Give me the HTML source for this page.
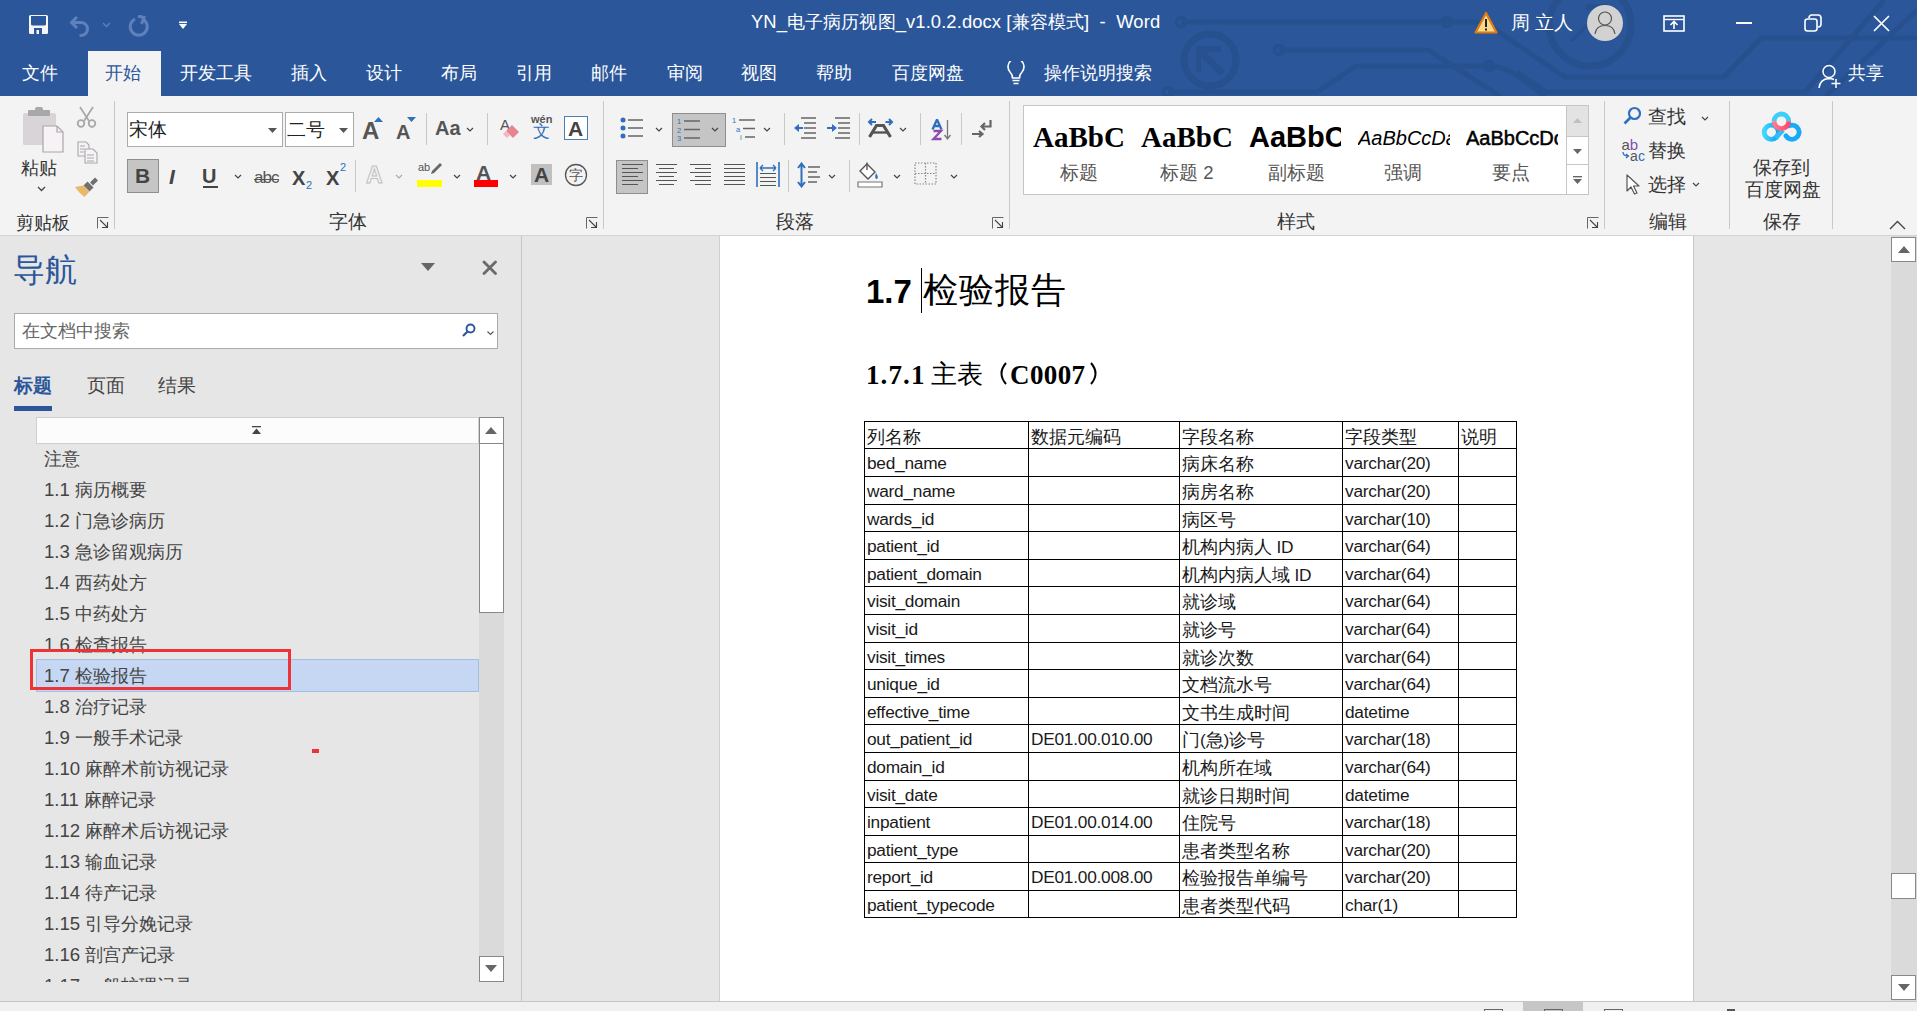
<!DOCTYPE html>
<html><head><meta charset="utf-8">
<style>
*{box-sizing:border-box}
html,body{margin:0;padding:0}
body{width:1917px;height:1011px;overflow:hidden;position:relative;background:#e6e6e6;font-family:"Liberation Sans",sans-serif;color:#262626}
.a{position:absolute}
.t{position:absolute;white-space:nowrap;line-height:1}
#title{left:0;top:0;width:1917px;height:96px;background:#2b579a;overflow:hidden}
.tab{position:absolute;top:64px;font-size:18px;color:#fff;white-space:nowrap;line-height:1}
#ribbon{left:0;top:96px;width:1917px;height:140px;background:#f3f3f3;border-bottom:1px solid #d4d4d4}
.sep{position:absolute;width:1px;background:#c8c8c8}
.glabel{position:absolute;top:117px;font-size:18px;color:#444;white-space:nowrap;line-height:1}
#nav{left:0;top:236px;width:522px;height:765px;background:#e6e6e6;border-right:1px solid #c6c6c6}
.ni{position:absolute;left:44px;font-size:18px;color:#444;white-space:nowrap;line-height:1}
#page{left:719px;top:236px;width:975px;height:765px;background:#fff;border-left:1px solid #d0d0d0;border-right:1px solid #c6c6c6}
table.d{position:absolute;left:864px;top:421px;border-collapse:collapse;font-size:17px;color:#000}
table.d td{border:1px solid #000;height:27.56px;padding:0 0 0 2px;line-height:1;vertical-align:middle;white-space:nowrap}
.td{font-size:17.3px;color:#1a1a1a;letter-spacing:-0.25px}
.cj{font-size:18px;letter-spacing:0}
</style></head><body>
<div id="title" class="a">
<svg class="a" style="left:0;top:0" width="1917" height="96" viewBox="0 0 1917 96">
<g fill="none" stroke="#26508e" stroke-width="5">
<path d="M1181 22 H1484 L1565 77 H1724 L1761 38 H1917"/>
<circle cx="1181" cy="22" r="4.5" stroke-width="3.5"/><circle cx="1447" cy="22" r="4.5" stroke-width="3.5"/>
<path d="M1279 50 H1428 L1500 96"/>
<circle cx="1279" cy="50" r="4.5" stroke-width="3.5"/>
<path d="M1168 92 H1317 L1356 66 H1489 Q1505 66 1520 78 L1545 96"/>
<circle cx="1168" cy="92" r="4.5" stroke-width="3.5"/><circle cx="1489" cy="66" r="4.5" stroke-width="3.5"/>
<path d="M1517 72 L1546 92 H1805 L1884 0"/>
<path d="M1826 96 L1917 10"/>
<circle cx="1210" cy="60" r="26" stroke-width="7"/>
<circle cx="1590" cy="25" r="41" stroke-width="7"/>
</g>
<g fill="#26508e">
<path d="M1196 46 h25 v6 h-15 l19 19 -5 5 -19 -19 v15 h-5z"/>
<path d="M1570 40 l30 -30 h-14 v-6 h22 v22 h-6 v-13 l-29 29z"/>
</g>
</svg>
<!-- QAT -->
<svg class="a" style="left:28px;top:14px" width="22" height="22" viewBox="0 0 22 22"><rect x="1" y="1" width="19" height="19" rx="1.5" fill="#f5f5f5"/><path d="M3 2 H18 V10 Q18 11.5 16.5 11.5 H4.5 Q3 11.5 3 10z" fill="#2b579a"/><rect x="6" y="14" width="8" height="6" fill="#2b579a"/><rect x="8.5" y="16" width="2.5" height="4" fill="#f5f5f5"/></svg>
<svg class="a" style="left:69px;top:15px" width="24" height="22" viewBox="0 0 24 22"><path d="M8 2 L2.5 7.5 L8 13" fill="none" stroke="#5f80bb" stroke-width="3"/><path d="M3 7.5 H12 A6.5 6.5 0 0 1 12 20.5 H10.5" fill="none" stroke="#5f80bb" stroke-width="3"/></svg>
<svg class="a" style="left:102px;top:22px" width="9" height="6" viewBox="0 0 9 6"><path d="M1 1 L4.5 4.5 L8 1" fill="none" stroke="#5f80bb" stroke-width="1.3"/></svg>
<svg class="a" style="left:127px;top:15px" width="23" height="22" viewBox="0 0 23 22"><path d="M15.5 4 A8.5 8.5 0 1 1 8 4" fill="none" stroke="#5f80bb" stroke-width="3"/><path d="M11 1 L17 2.5 L14.5 9" fill="none" stroke="#5f80bb" stroke-width="3"/></svg>
<svg class="a" style="left:179px;top:21px" width="9" height="9" viewBox="0 0 9 9"><rect x="0" y="0.5" width="8" height="1.6" fill="#fff"/><path d="M0 3 H8 L4 8z" fill="#fff"/></svg>
<div class="t" style="left:751px;top:13px;font-size:18.4px;letter-spacing:0.1px;color:#fff">YN_电子病历视图_v1.0.2.docx [兼容模式]&nbsp; - &nbsp;Word</div>
<svg class="a" style="left:1474px;top:11px" width="24" height="23" viewBox="0 0 24 23"><path d="M12 2 L22.5 21.5 H1.5z" fill="#f8d98b" stroke="#e07a10" stroke-width="2.2" stroke-linejoin="round"/><rect x="11" y="8" width="2" height="8" fill="#222"/><rect x="11" y="17.5" width="2" height="2" fill="#222"/></svg>
<div class="t" style="left:1511px;top:13px;font-size:19px;color:#fff">周 立人</div>
<div class="a" style="left:1587px;top:5px;width:36px;height:36px;border-radius:50%;background:#d2d2d2"></div>
<svg class="a" style="left:1587px;top:5px" width="36" height="36" viewBox="0 0 36 36"><circle cx="18" cy="13.5" r="6.5" fill="none" stroke="#555" stroke-width="1.2"/><path d="M8 29 Q9 20.5 18 20.5 Q27 20.5 28 29" fill="none" stroke="#555" stroke-width="1.2"/></svg>
<svg class="a" style="left:1663px;top:15px" width="22" height="17" viewBox="0 0 22 17"><rect x="1" y="1" width="20" height="15" fill="none" stroke="#fff" stroke-width="1.6"/><path d="M1 4.5 H21" stroke="#fff" stroke-width="1.4"/><path d="M11 14 V7 M7.5 10 L11 6.5 L14.5 10" fill="none" stroke="#fff" stroke-width="1.6"/></svg>
<div class="a" style="left:1736px;top:22px;width:16px;height:1.6px;background:#fff"></div>
<svg class="a" style="left:1804px;top:14px" width="18" height="18" viewBox="0 0 18 18"><rect x="1" y="5" width="12" height="12" rx="2.5" fill="none" stroke="#fff" stroke-width="1.6"/><path d="M5 4 Q5 1 8 1 H14 Q17 1 17 4 V10 Q17 13 14 13" fill="none" stroke="#fff" stroke-width="1.6"/></svg>
<svg class="a" style="left:1873px;top:15px" width="17" height="17" viewBox="0 0 17 17"><path d="M1 1 L16 16 M16 1 L1 16" stroke="#fff" stroke-width="1.7"/></svg>
<!-- tabs -->
<div class="a" style="left:88px;top:51px;width:73px;height:45px;background:#f3f3f3"></div>
<div class="tab" style="left:22px">文件</div>
<div class="tab" style="left:105px;color:#2b579a">开始</div>
<div class="tab" style="left:180px">开发工具</div>
<div class="tab" style="left:291px">插入</div>
<div class="tab" style="left:366px">设计</div>
<div class="tab" style="left:441px">布局</div>
<div class="tab" style="left:516px">引用</div>
<div class="tab" style="left:591px">邮件</div>
<div class="tab" style="left:667px">审阅</div>
<div class="tab" style="left:741px">视图</div>
<div class="tab" style="left:816px">帮助</div>
<div class="tab" style="left:892px">百度网盘</div>
<svg class="a" style="left:1006px;top:61px" width="20" height="25" viewBox="0 0 20 25"><path d="M6.5 17 Q6.5 13.5 4 11 A8 8 0 1 1 16 11 Q13.5 13.5 13.5 17z" fill="none" stroke="#fff" stroke-width="1.6"/><path d="M6.5 19.5 H13.5 M7.5 22.5 H12.5" stroke="#fff" stroke-width="1.6"/></svg>
<div class="tab" style="left:1044px">操作说明搜索</div>
<svg class="a" style="left:1818px;top:64px" width="24" height="25" viewBox="0 0 24 25"><circle cx="11" cy="7.5" r="6" fill="none" stroke="#fff" stroke-width="1.5"/><path d="M1 24 Q2 15 11 14.5 Q14 14.5 16 15.5" fill="none" stroke="#fff" stroke-width="1.5"/><path d="M18 15 V24 M13.5 19.5 H22.5" stroke="#fff" stroke-width="1.5"/></svg>
<div class="tab" style="left:1848px">共享</div>
</div>
<div id="ribbon" class="a">
<!-- clipboard group -->
<svg class="a" style="left:22px;top:11px" width="43" height="46" viewBox="0 0 43 46"><path d="M3 6 Q1 6 1 8 V37 Q1 38 3 38 H21 V19 H34 V8 Q34 6 32 6z" fill="#d8d4d8"/><rect x="6" y="3" width="22" height="6" rx="1" fill="#a8a8a8"/><rect x="13" y="0" width="8" height="5" rx="2" fill="#a8a8a8"/><path d="M21 19 H35 L41 25 V45 H21z" fill="#f6f2f6" stroke="#a8a8a8" stroke-width="1.2"/><path d="M35 19 V25 H41" fill="none" stroke="#a8a8a8" stroke-width="1.2"/></svg>
<div class="t" style="left:21px;top:62.5px;font-size:18px;color:#333">粘贴</div>
<svg class="a" style="left:37px;top:90px" width="9" height="6" viewBox="0 0 9 6"><path d="M1 1 L4.5 4.5 L8 1" fill="none" stroke="#444" stroke-width="1.3"/></svg>
<svg class="a" style="left:76px;top:10px" width="21" height="22" viewBox="0 0 21 22"><path d="M4 1 L13 15 M17 1 L8 15" stroke="#a8a8a8" stroke-width="1.8"/><circle cx="5" cy="17.5" r="3.3" fill="none" stroke="#a8a8a8" stroke-width="1.8"/><circle cx="16" cy="17.5" r="3.3" fill="none" stroke="#a8a8a8" stroke-width="1.8"/></svg>
<svg class="a" style="left:77px;top:45px" width="21" height="23" viewBox="0 0 21 23"><path d="M1 1 H9 L12 4 V15 H1z" fill="#f6f2f6" stroke="#a8a8a8" stroke-width="1.1"/><path d="M8 8 H16 L20 12 V22 H8z" fill="#f6f2f6" stroke="#a8a8a8" stroke-width="1.1"/><path d="M3 5 H8 M3 8 H7 M3 11 H7 M10 14 H17 M10 17 H17 M10 20 H17" stroke="#a8a8a8" stroke-width="1"/></svg>
<svg class="a" style="left:75px;top:80px" width="24" height="23" viewBox="0 0 24 23"><path d="M20 1.5 L23 4.5 L18 9.5 L15 6.5z" fill="#707070"/><path d="M12.5 5.5 L18.5 11.5 L14.5 15.5 L8.5 9.5z" fill="#707070"/><path d="M8.5 9.5 L14.5 15.5 L9.5 21 Q4 17 0 11z" fill="#e8b96a"/></svg>
<div class="t" style="left:16px;top:117.5px;font-size:18px;color:#333">剪贴板</div>
<svg class="a" style="left:97px;top:121px" width="12" height="12" viewBox="0 0 12 12"><path d="M0.5 11.5 V0.5 H11.5" fill="none" stroke="#666" stroke-width="1"/><path d="M3 3 L10 10 M5 10.5 H10.5 V5" fill="none" stroke="#444" stroke-width="1.1"/></svg>
<div class="sep" style="left:114px;top:5px;height:128px"></div>
<!-- font group -->
<div class="a" style="left:127px;top:16px;width:156px;height:35px;background:#fff;border:1px solid #ababab"></div>
<div class="t" style="left:129px;top:25px;font-size:18.5px;color:#222">宋体</div>
<svg class="a" style="left:268px;top:32px" width="9" height="5" viewBox="0 0 9 5"><path d="M0 0 H9 L4.5 5z" fill="#555"/></svg>
<div class="a" style="left:285px;top:16px;width:69px;height:35px;background:#fff;border:1px solid #ababab"></div>
<div class="t" style="left:287px;top:25px;font-size:18.5px;color:#222">二号</div>
<svg class="a" style="left:339px;top:32px" width="9" height="5" viewBox="0 0 9 5"><path d="M0 0 H9 L4.5 5z" fill="#555"/></svg>
<div class="t" style="left:362px;top:23px;font-size:24px;font-weight:bold;color:#555">A</div>
<svg class="a" style="left:374px;top:21px" width="9" height="5" viewBox="0 0 9 5"><path d="M0 5 H9 L4.5 0z" fill="#2f6fbd"/></svg>
<div class="t" style="left:396px;top:26px;font-size:20px;font-weight:bold;color:#555">A</div>
<svg class="a" style="left:407px;top:21px" width="9" height="5" viewBox="0 0 9 5"><path d="M0 0 H9 L4.5 5z" fill="#2f6fbd"/></svg>
<div class="sep" style="left:426px;top:17px;height:32px"></div>
<div class="t" style="left:435px;top:22px;font-size:20px;font-weight:bold;color:#555">Aa</div>
<svg class="a" style="left:466px;top:31px" width="8" height="5" viewBox="0 0 8 5"><path d="M1 1 L4 4 L7 1" fill="none" stroke="#444" stroke-width="1.2"/></svg>
<div class="sep" style="left:487px;top:17px;height:32px"></div>
<div class="t" style="left:500px;top:21px;font-size:15px;color:#555">A</div>
<svg class="a" style="left:503px;top:27px" width="17" height="17" viewBox="0 0 17 17"><path d="M9 2 L16 9 L10 15 L3 8z" fill="#e8838f"/><path d="M3 8 L7 12 L4 15 L0 11z" fill="#f3b6bd"/></svg>
<div class="t" style="left:531px;top:18px;font-size:11px;color:#555;font-weight:bold">wén</div>
<div class="t" style="left:533px;top:27px;font-size:17px;color:#2f6fbd">文</div>
<div class="a" style="left:564px;top:20px;width:24px;height:24px;border:1px solid #4a7ebb;background:#fff"></div>
<div class="t" style="left:568px;top:22px;font-size:21px;font-weight:bold;color:#444">A</div>
<div class="a" style="left:127px;top:63px;width:32px;height:34px;background:#c5c5c5;border:1px solid #8e8e8e"></div>
<div class="t" style="left:135px;top:69px;font-size:21px;font-weight:bold;color:#444">B</div>
<div class="t" style="left:169px;top:70px;font-size:21px;font-style:italic;font-weight:bold;color:#444">I</div>
<div class="t" style="left:202px;top:70px;font-size:20px;font-weight:bold;color:#444">U</div>
<div class="a" style="left:203px;top:90px;width:15px;height:2px;background:#444"></div>
<svg class="a" style="left:234px;top:78px" width="8" height="5" viewBox="0 0 8 5"><path d="M1 1 L4 4 L7 1" fill="none" stroke="#444" stroke-width="1.2"/></svg>
<div class="t" style="left:254px;top:73px;font-size:17px;color:#555;letter-spacing:-1px">abc</div>
<div class="a" style="left:254px;top:83px;width:25px;height:1.3px;background:#555"></div>
<div class="t" style="left:292px;top:72px;font-size:20px;font-weight:bold;color:#444">X</div>
<div class="t" style="left:306px;top:84px;font-size:11px;color:#2f6fbd">2</div>
<div class="t" style="left:326px;top:72px;font-size:20px;font-weight:bold;color:#444">X</div>
<div class="t" style="left:340px;top:66px;font-size:11px;color:#2f6fbd">2</div>
<div class="sep" style="left:355px;top:64px;height:32px"></div>
<div class="t" style="left:366px;top:68px;font-size:23px;font-weight:bold;color:#f3f3f3;-webkit-text-stroke:1px #c0c0c0">A</div>
<svg class="a" style="left:395px;top:78px" width="8" height="5" viewBox="0 0 8 5"><path d="M1 1 L4 4 L7 1" fill="none" stroke="#aaa" stroke-width="1.2"/></svg>
<div class="t" style="left:418px;top:66px;font-size:11px;color:#555">ab</div>
<svg class="a" style="left:428px;top:66px" width="15" height="15" viewBox="0 0 15 15"><path d="M12 1 L14 3 L6 11 L3 12 L4 9z" fill="#666"/></svg>
<div class="a" style="left:417px;top:84px;width:25px;height:7px;background:#ffff00"></div>
<svg class="a" style="left:453px;top:78px" width="8" height="5" viewBox="0 0 8 5"><path d="M1 1 L4 4 L7 1" fill="none" stroke="#444" stroke-width="1.2"/></svg>
<div class="t" style="left:476px;top:66px;font-size:21px;font-weight:bold;color:#555">A</div>
<div class="a" style="left:474px;top:84px;width:24px;height:7px;background:#ff0000"></div>
<svg class="a" style="left:509px;top:78px" width="8" height="5" viewBox="0 0 8 5"><path d="M1 1 L4 4 L7 1" fill="none" stroke="#444" stroke-width="1.2"/></svg>
<div class="a" style="left:531px;top:68px;width:21px;height:21px;background:#c0c0c0"></div>
<div class="t" style="left:534px;top:68px;font-size:21px;font-weight:bold;color:#444">A</div>
<svg class="a" style="left:564px;top:67px" width="24" height="24" viewBox="0 0 24 24"><circle cx="12" cy="12" r="10.5" fill="none" stroke="#555" stroke-width="1.3"/></svg>
<div class="t" style="left:569px;top:72px;font-size:14px;color:#555">字</div>
<div class="t" style="left:329px;top:117px;font-size:18.5px;color:#333">字体</div>
<svg class="a" style="left:586px;top:121px" width="12" height="12" viewBox="0 0 12 12"><path d="M0.5 11.5 V0.5 H11.5" fill="none" stroke="#666" stroke-width="1"/><path d="M3 3 L10 10 M5 10.5 H10.5 V5" fill="none" stroke="#444" stroke-width="1.1"/></svg>
<div class="sep" style="left:603px;top:5px;height:128px"></div>
<svg class="a" style="left:620px;top:21px" width="24" height="22" viewBox="0 0 24 22"><circle cx="3" cy="3" r="2.5" fill="#2f6fbd"/><circle cx="3" cy="11" r="2.5" fill="#2f6fbd"/><circle cx="3" cy="19" r="2.5" fill="#2f6fbd"/><path d="M8 3 H23 M8 11 H23 M8 19 H23" stroke="#666" stroke-width="1.4"/></svg><svg class="a" style="left:655px;top:31px" width="8" height="5" viewBox="0 0 8 5"><path d="M1 1 L4 4 L7 1" fill="none" stroke="#444" stroke-width="1.2"/></svg><div class="a" style="left:672px;top:17px;width:54px;height:34px;background:#c5c5c5;border:1px solid #8e8e8e"></div><svg class="a" style="left:677px;top:20px" width="24" height="26" viewBox="0 0 24 26"><text x="0" y="8" font-size="7.5" fill="#2f6fbd" font-family="Liberation Sans">1</text><text x="0" y="16.5" font-size="7.5" fill="#2f6fbd" font-family="Liberation Sans">2</text><text x="0" y="25" font-size="7.5" fill="#2f6fbd" font-family="Liberation Sans">3</text><path d="M7 5 H23 M7 13.5 H23 M7 22 H23" stroke="#666" stroke-width="1.4"/></svg><svg class="a" style="left:711px;top:31px" width="8" height="5" viewBox="0 0 8 5"><path d="M1 1 L4 4 L7 1" fill="none" stroke="#444" stroke-width="1.2"/></svg><svg class="a" style="left:732px;top:19px" width="24" height="26" viewBox="0 0 24 26"><text x="0" y="8" font-size="7.5" fill="#2f6fbd" font-family="Liberation Sans">1</text><text x="4" y="16.5" font-size="7.5" fill="#2f6fbd" font-family="Liberation Sans">a</text><text x="8" y="25" font-size="7.5" fill="#2f6fbd" font-family="Liberation Sans">i</text><path d="M7 5 H23 M11 13.5 H23 M13 22 H23" stroke="#666" stroke-width="1.4"/></svg><svg class="a" style="left:763px;top:31px" width="8" height="5" viewBox="0 0 8 5"><path d="M1 1 L4 4 L7 1" fill="none" stroke="#444" stroke-width="1.2"/></svg><div class="sep" style="left:784px;top:17px;height:32px"></div><svg class="a" style="left:793px;top:21px" width="24" height="22" viewBox="0 0 24 22"><path d="M8 1 H23 M11 6 H23 M11 11 H23 M11 16 H23 M8 21 H23" stroke="#666" stroke-width="1.4"/><path d="M1 11 L6 7 V15z" fill="#2f6fbd"/><path d="M5 11 H10" stroke="#2f6fbd" stroke-width="2"/></svg><svg class="a" style="left:827px;top:21px" width="24" height="22" viewBox="0 0 24 22"><path d="M8 1 H23 M11 6 H23 M11 11 H23 M11 16 H23 M8 21 H23" stroke="#666" stroke-width="1.4"/><path d="M10 11 L5 7 V15z" fill="#2f6fbd"/><path d="M0 11 H6" stroke="#2f6fbd" stroke-width="2"/></svg><div class="sep" style="left:859px;top:17px;height:32px"></div><svg class="a" style="left:867px;top:20px" width="28" height="24" viewBox="0 0 28 24"><path d="M2.5 21 L9.5 9.5 H16.5 L23.5 21" fill="none" stroke="#555" stroke-width="3.2" stroke-linejoin="miter"/><path d="M6 16.5 H20" stroke="#555" stroke-width="2.4"/><path d="M2.5 6 H9 M5 3 L2 6 L5 9 M18.5 6 H25 M22 3 L25 6 L22 9" fill="none" stroke="#2f6fbd" stroke-width="2"/></svg><svg class="a" style="left:899px;top:31px" width="8" height="5" viewBox="0 0 8 5"><path d="M1 1 L4 4 L7 1" fill="none" stroke="#444" stroke-width="1.2"/></svg><div class="sep" style="left:920px;top:17px;height:32px"></div><svg class="a" style="left:931px;top:22.5px" width="22" height="22" viewBox="0 0 22 22"><path d="M1.5 10.5 L6 0.5 L10.5 10.5 M3.2 7 H8.8" fill="none" stroke="#2f6fbd" stroke-width="2.3"/><path d="M2.5 12 H10 L2.5 20 H10.5" fill="none" stroke="#8a4cb0" stroke-width="2.3"/><path d="M16.5 1 V20 M13.5 16 L16.5 20 L19.5 16" fill="none" stroke="#777" stroke-width="1.3"/></svg><div class="sep" style="left:961px;top:17px;height:32px"></div><svg class="a" style="left:970px;top:23px" width="23" height="20" viewBox="0 0 23 20"><path d="M20.5 1 V7.5 H12 M15 4 L11.5 7.5 L15 11" fill="none" stroke="#666" stroke-width="2.2"/><path d="M2 15 H12 M9 12 L12.5 15 L9 18" fill="none" stroke="#666" stroke-width="2.2"/></svg><div class="a" style="left:616px;top:64px;width:32px;height:34px;background:#c5c5c5;border:1px solid #8e8e8e"></div><svg class="a" style="left:622px;top:67px" width="22" height="22" viewBox="0 0 22 22"><path d="M0 1.5 H21 M0 5.5 H16 M0 9.5 H21 M0 13.5 H16 M0 17.5 H21 M0 21.5 H16 " stroke="#555" stroke-width="1.2"/></svg><svg class="a" style="left:656px;top:67px" width="22" height="22" viewBox="0 0 22 22"><path d="M0 1.5 H21 M3 5.5 H18 M0 9.5 H21 M3 13.5 H18 M0 17.5 H21 M3 21.5 H18 " stroke="#555" stroke-width="1.2"/></svg><svg class="a" style="left:690px;top:67px" width="22" height="22" viewBox="0 0 22 22"><path d="M0 1.5 H21 M5 5.5 H21 M0 9.5 H21 M5 13.5 H21 M0 17.5 H21 M5 21.5 H21 " stroke="#555" stroke-width="1.2"/></svg><svg class="a" style="left:724px;top:67px" width="22" height="22" viewBox="0 0 22 22"><path d="M0 1.5 H21 M0 5.5 H21 M0 9.5 H21 M0 13.5 H21 M0 17.5 H21 M0 21.5 H21 " stroke="#555" stroke-width="1.2"/></svg><svg class="a" style="left:756px;top:66px" width="24" height="26" viewBox="0 0 24 26"><path d="M1 0 V25 M23 0 V25" stroke="#2f6fbd" stroke-width="1.6"/><path d="M4 6 H20 M4 6 L7 3 M4 6 L7 9 M20 6 L17 3 M20 6 L17 9" fill="none" stroke="#2f6fbd" stroke-width="1.4"/><path d="M4 11.5 H20 M4 15.5 H20 M4 19.5 H20 M4 23.5 H20" stroke="#555" stroke-width="1.1"/></svg><div class="sep" style="left:788px;top:64px;height:32px"></div><svg class="a" style="left:797px;top:66px" width="24" height="26" viewBox="0 0 24 26"><path d="M4.5 2 V24 M1 6 L4.5 1.5 L8 6 M1 20 L4.5 24.5 L8 20" fill="none" stroke="#2f6fbd" stroke-width="2"/><path d="M11 5 H23 M11 10 H20 M11 15 H23 M11 20 H20" stroke="#666" stroke-width="1.4"/></svg><svg class="a" style="left:828px;top:78px" width="8" height="5" viewBox="0 0 8 5"><path d="M1 1 L4 4 L7 1" fill="none" stroke="#444" stroke-width="1.2"/></svg><div class="sep" style="left:849px;top:64px;height:32px"></div><svg class="a" style="left:857px;top:66px" width="26" height="26" viewBox="0 0 26 26"><path d="M10 2 L18 10 L11 17 L3 9z" fill="#fff" stroke="#555" stroke-width="1.4"/><path d="M10 0.5 V8" stroke="#555" stroke-width="1.4"/><path d="M19 11 Q22 15 20 17 Q17 17 19 11z" fill="#2f6fbd"/><path d="M1 20 H25 V25 H1z" fill="#fff" stroke="#777" stroke-width="1.2"/></svg><svg class="a" style="left:893px;top:78px" width="8" height="5" viewBox="0 0 8 5"><path d="M1 1 L4 4 L7 1" fill="none" stroke="#444" stroke-width="1.2"/></svg><svg class="a" style="left:914px;top:66px" width="23" height="23" viewBox="0 0 23 23"><path d="M1 1 H22 V22 H1z M11.5 1 V22 M1 11.5 H22" fill="none" stroke="#888" stroke-width="1.2" stroke-dasharray="1.5 1.5"/></svg><svg class="a" style="left:950px;top:78px" width="8" height="5" viewBox="0 0 8 5"><path d="M1 1 L4 4 L7 1" fill="none" stroke="#444" stroke-width="1.2"/></svg><div class="t" style="left:776px;top:117px;font-size:18.5px;color:#333">段落</div><svg class="a" style="left:992px;top:121px" width="12" height="12" viewBox="0 0 12 12"><path d="M0.5 11.5 V0.5 H11.5" fill="none" stroke="#666" stroke-width="1"/><path d="M3 3 L10 10 M5 10.5 H10.5 V5" fill="none" stroke="#444" stroke-width="1.1"/></svg><div class="sep" style="left:1009px;top:5px;height:128px"></div><div class="a" style="left:1023px;top:9px;width:566px;height:90px;background:#fff;border:1px solid #c6c6c6"></div><div class="a" style="left:1566px;top:9px;width:23px;height:32px;background:#e3e3e3;border:1px solid #c6c6c6"></div><div class="a" style="left:1566px;top:40px;width:23px;height:29px;background:#fff;border:1px solid #c6c6c6"></div><div class="a" style="left:1566px;top:68px;width:23px;height:31px;background:#fff;border:1px solid #c6c6c6"></div><svg class="a" style="left:1573px;top:22px" width="9" height="5" viewBox="0 0 9 5"><path d="M0 5 H9 L4.5 0z" fill="#c0c0c0"/></svg><svg class="a" style="left:1573px;top:53px" width="9" height="5" viewBox="0 0 9 5"><path d="M0 0 H9 L4.5 5z" fill="#666"/></svg><svg class="a" style="left:1573px;top:80px" width="9" height="8" viewBox="0 0 9 8"><rect x="0" y="0" width="9" height="1.4" fill="#666"/><path d="M0 3 H9 L4.5 8z" fill="#666"/></svg><div class="a" style="left:1030px;top:24px;width:530px;height:36px;overflow:hidden"><div class="t" style="left:3px;top:3px;font-size:29px;font-weight:bold;font-family:'Liberation Serif',serif;color:#000;width:91px;overflow:hidden">AaBbC(</div><div class="t" style="left:111px;top:3px;font-size:29px;font-weight:bold;font-family:'Liberation Serif',serif;color:#000;width:91px;overflow:hidden">AaBbC(</div><div class="t" style="left:219px;top:3px;font-size:29px;font-weight:bold;font-family:'Liberation Sans',sans-serif;color:#000;width:92px;overflow:hidden">AaBbCc</div><div class="t" style="left:328px;top:8px;font-size:20px;font-style:italic;color:#000;width:92px;overflow:hidden">AaBbCcDa</div><div class="t" style="left:436px;top:8px;font-size:20px;color:#000;width:92px;overflow:hidden;-webkit-text-stroke:0.5px #000">AaBbCcDc</div></div><div class="t" style="left:1060px;top:68px;font-size:18.5px;color:#555">标题</div><div class="t" style="left:1160px;top:68px;font-size:18.5px;color:#555">标题 2</div><div class="t" style="left:1268px;top:68px;font-size:18.5px;color:#555">副标题</div><div class="t" style="left:1384px;top:68px;font-size:18.5px;color:#555">强调</div><div class="t" style="left:1492px;top:68px;font-size:18.5px;color:#555">要点</div><div class="t" style="left:1277px;top:117px;font-size:18.5px;color:#333">样式</div><svg class="a" style="left:1587px;top:121px" width="12" height="12" viewBox="0 0 12 12"><path d="M0.5 11.5 V0.5 H11.5" fill="none" stroke="#666" stroke-width="1"/><path d="M3 3 L10 10 M5 10.5 H10.5 V5" fill="none" stroke="#444" stroke-width="1.1"/></svg><div class="sep" style="left:1604px;top:5px;height:128px"></div><svg class="a" style="left:1623px;top:10px" width="19" height="19" viewBox="0 0 19 19"><circle cx="11.5" cy="7.5" r="5.5" fill="none" stroke="#2f6fbd" stroke-width="2.2"/><path d="M7.5 11.5 L1.5 17.5" stroke="#2f6fbd" stroke-width="2.6"/></svg><div class="t" style="left:1648px;top:12px;font-size:18.5px;color:#333">查找</div><svg class="a" style="left:1701px;top:20px" width="8" height="5" viewBox="0 0 8 5"><path d="M1 1 L4 4 L7 1" fill="none" stroke="#444" stroke-width="1.2"/></svg><svg class="a" style="left:1620px;top:41.5px" width="28" height="27" viewBox="0 0 28 27"><text x="1.5" y="11.5" font-size="15" font-family="Liberation Sans" fill="#555">a</text><text x="9.8" y="11.5" font-size="15" font-family="Liberation Sans" fill="#8a4cb0">b</text><text x="10" y="22.5" font-size="14" font-family="Liberation Sans" fill="#555">a</text><text x="18" y="22.5" font-size="14" font-family="Liberation Sans" fill="#2f6fbd">c</text><path d="M3 14 Q3 18 8 18 M6 16 L8.5 18 L6 20" fill="none" stroke="#2f6fbd" stroke-width="1.3"/></svg><div class="t" style="left:1648px;top:46px;font-size:18.5px;color:#333">替换</div><svg class="a" style="left:1626px;top:78px" width="16" height="21" viewBox="0 0 16 21"><path d="M1 1 V17 L5 13 L8.5 20 L11 19 L7.5 12 H13z" fill="#fff" stroke="#555" stroke-width="1.2" stroke-linejoin="round"/></svg><div class="t" style="left:1648px;top:80px;font-size:18.5px;color:#333">选择</div><svg class="a" style="left:1692px;top:86px" width="8" height="5" viewBox="0 0 8 5"><path d="M1 1 L4 4 L7 1" fill="none" stroke="#444" stroke-width="1.2"/></svg><div class="t" style="left:1649px;top:117px;font-size:18.5px;color:#333">编辑</div><div class="sep" style="left:1729px;top:5px;height:128px"></div><svg class="a" style="left:1750px;top:4px" width="65" height="50" viewBox="0 0 65 50"><defs><linearGradient id="bg1" x1="0" x2="1" y1="0" y2="0"><stop offset="0" stop-color="#41d6ff"/><stop offset="1" stop-color="#0c9ff5"/></linearGradient><linearGradient id="pk" x1="0" x2="1"><stop offset="0" stop-color="#ff7a8a"/><stop offset="1" stop-color="#ff4a70"/></linearGradient></defs>
<g fill="none" stroke-width="4.8" stroke-linecap="round">
<circle cx="21.3" cy="32.2" r="7.1" stroke="url(#bg1)"/>
<path d="M39.00 25.77 A7.1 7.1 0 1 1 35.85 35.75" stroke="#17aaf7"/>
<path d="M25.5 38 L33 30" stroke="#2dc0fb" stroke-linecap="butt"/>
<path d="M24.1 21.3 A7.3 7.3 0 0 1 38.7 21.3" stroke="#3ccff9" stroke-linecap="butt"/>
<path d="M24.1 21.3 A7.3 7.3 0 0 0 38.7 21.3" stroke="url(#pk)" stroke-linecap="butt"/>
</g></svg><div class="t" style="left:1753px;top:63px;font-size:18.5px;color:#333">保存到</div><div class="t" style="left:1745px;top:85px;font-size:18.5px;color:#333">百度网盘</div><div class="t" style="left:1763px;top:117px;font-size:18.5px;color:#333">保存</div><div class="sep" style="left:1832px;top:5px;height:128px"></div><svg class="a" style="left:1889px;top:124px" width="17" height="10" viewBox="0 0 17 10"><path d="M1 9 L8.5 1.5 L16 9" fill="none" stroke="#444" stroke-width="1.4"/></svg>
</div>
<div id="nav" class="a">
<div class="t" style="left:13px;top:18px;font-size:32px;color:#2b579a">导航</div>
<svg class="a" style="left:421px;top:27px" width="14" height="8" viewBox="0 0 14 8"><path d="M0 0 H14 L7 8z" fill="#666"/></svg>
<svg class="a" style="left:482px;top:24px" width="15" height="15" viewBox="0 0 15 15"><path d="M2 2 L13.5 13.5 M13.5 2 L2 13.5" stroke="#6a6a6a" stroke-width="2.8" stroke-linecap="round"/></svg>
<div class="a" style="left:14px;top:77px;width:484px;height:36px;background:#fff;border:1px solid #ababab"></div>
<div class="t" style="left:22px;top:86px;font-size:18px;color:#666">在文档中搜索</div>
<svg class="a" style="left:462px;top:87px" width="14" height="14" viewBox="0 0 14 14"><circle cx="8.5" cy="5.5" r="4" fill="none" stroke="#2b579a" stroke-width="1.9"/><path d="M5.5 8.5 L1 13" stroke="#2b579a" stroke-width="2.2"/></svg>
<svg class="a" style="left:487px;top:95px" width="7" height="5" viewBox="0 0 7 5"><path d="M0.5 0.5 L3.5 3.5 L6.5 0.5" fill="none" stroke="#555" stroke-width="1.1"/></svg>
<div class="t" style="left:14px;top:141px;font-size:18.5px;color:#2b579a;font-weight:bold">标题</div>
<div class="t" style="left:87px;top:141px;font-size:18.5px;color:#444">页面</div>
<div class="t" style="left:158px;top:141px;font-size:18.5px;color:#444">结果</div>
<div class="a" style="left:14px;top:170px;width:38px;height:5px;background:#2b579a"></div>
<div class="a" style="left:36px;top:181px;width:443px;height:27px;background:#fcfcfc;border:1px solid #d0d0d0"></div>
<svg class="a" style="left:252px;top:190px" width="9" height="8" viewBox="0 0 9 8"><rect x="0" y="0" width="9" height="1.3" fill="#444"/><path d="M0 8 H9 L4.5 2.5z" fill="#444"/></svg>
<div class="a" style="left:36px;top:208px;width:443px;height:538px;overflow:hidden">
<div class="a" style="left:0;top:215px;width:443px;height:33px;background:#c5d7f2;border:1px solid #a3bde3"></div>
<div class="ni" style="left:8px;top:6px">注意</div>
<div class="ni" style="left:8px;top:37px"><span style="font-size:18.6px">1.1 </span>病历概要</div>
<div class="ni" style="left:8px;top:68px"><span style="font-size:18.6px">1.2 </span>门急诊病历</div>
<div class="ni" style="left:8px;top:99px"><span style="font-size:18.6px">1.3 </span>急诊留观病历</div>
<div class="ni" style="left:8px;top:130px"><span style="font-size:18.6px">1.4 </span>西药处方</div>
<div class="ni" style="left:8px;top:161px"><span style="font-size:18.6px">1.5 </span>中药处方</div>
<div class="ni" style="left:8px;top:192px"><span style="font-size:18.6px">1.6 </span>检查报告</div>
<div class="ni" style="left:8px;top:223px"><span style="font-size:18.6px">1.7 </span>检验报告</div>
<div class="ni" style="left:8px;top:254px"><span style="font-size:18.6px">1.8 </span>治疗记录</div>
<div class="ni" style="left:8px;top:285px"><span style="font-size:18.6px">1.9 </span>一般手术记录</div>
<div class="ni" style="left:8px;top:316px"><span style="font-size:18.6px">1.10 </span>麻醉术前访视记录</div>
<div class="ni" style="left:8px;top:347px"><span style="font-size:18.6px">1.11 </span>麻醉记录</div>
<div class="ni" style="left:8px;top:378px"><span style="font-size:18.6px">1.12 </span>麻醉术后访视记录</div>
<div class="ni" style="left:8px;top:409px"><span style="font-size:18.6px">1.13 </span>输血记录</div>
<div class="ni" style="left:8px;top:440px"><span style="font-size:18.6px">1.14 </span>待产记录</div>
<div class="ni" style="left:8px;top:471px"><span style="font-size:18.6px">1.15 </span>引导分娩记录</div>
<div class="ni" style="left:8px;top:502px"><span style="font-size:18.6px">1.16 </span>剖宫产记录</div>
<div class="ni" style="left:8px;top:533px"><span style="font-size:18.6px">1.17 </span>一般护理记录</div>

</div>
<div class="a" style="left:479px;top:181px;width:25px;height:565px;background:#dadada"></div>
<div class="a" style="left:479px;top:181px;width:25px;height:27px;background:#fff;border:1px solid #888"></div>
<svg class="a" style="left:485px;top:191px" width="12" height="7" viewBox="0 0 12 7"><path d="M0 7 H12 L6 0z" fill="#666"/></svg>
<div class="a" style="left:479px;top:207px;width:25px;height:170px;background:#fff;border:1px solid #888"></div>
<div class="a" style="left:479px;top:720px;width:25px;height:26px;background:#fff;border:1px solid #888"></div>
<svg class="a" style="left:485px;top:729px" width="12" height="7" viewBox="0 0 12 7"><path d="M0 0 H12 L6 7z" fill="#666"/></svg>
<div class="a" style="left:30px;top:413px;width:261px;height:41px;border:3px solid #ee3338"></div>
<div class="a" style="left:312px;top:513px;width:7px;height:4px;background:#ee3338"></div>
</div>
<div id="page" class="a"></div>
<div id="doc"><div class="t" style="left:866px;top:275px;font-size:33px;font-weight:bold;color:#000">1.7</div><div class="a" style="left:921px;top:268px;width:1px;height:45px;background:#000"></div><div class="t" style="left:923px;top:271.5px;font-size:35px;color:#000;letter-spacing:1px">检验报告</div><div class="t" style="left:866px;top:361.5px;font-size:27px;font-weight:bold;font-family:'Liberation Serif',serif;color:#000;letter-spacing:1.1px">1.7.1</div><div class="t" style="left:931px;top:362px;font-size:25.5px;color:#000">主表</div><svg class="a" style="left:990px;top:360px" width="116" height="28" viewBox="0 0 116 28"><path d="M16 3 Q7 13.5 16 24" fill="none" stroke="#000" stroke-width="2"/><path d="M101 3 Q110 13.5 101 24" fill="none" stroke="#000" stroke-width="2"/></svg><div class="t" style="left:1010px;top:361.5px;font-size:27px;font-weight:bold;font-family:'Liberation Serif',serif;color:#000;letter-spacing:0.4px">C0007</div><svg class="a" style="left:0;top:0" width="1917" height="1011" shape-rendering="crispEdges"><rect x="864" y="421" width="1" height="497" fill="#000"/><rect x="1028" y="421" width="1" height="497" fill="#000"/><rect x="1179" y="421" width="1" height="497" fill="#000"/><rect x="1342" y="421" width="1" height="497" fill="#000"/><rect x="1458" y="421" width="1" height="497" fill="#000"/><rect x="1516" y="421" width="1" height="497" fill="#000"/><rect x="864" y="421" width="653" height="1" fill="#000"/><rect x="864" y="448" width="653" height="1" fill="#000"/><rect x="864" y="476" width="653" height="1" fill="#000"/><rect x="864" y="504" width="653" height="1" fill="#000"/><rect x="864" y="531" width="653" height="1" fill="#000"/><rect x="864" y="559" width="653" height="1" fill="#000"/><rect x="864" y="586" width="653" height="1" fill="#000"/><rect x="864" y="614" width="653" height="1" fill="#000"/><rect x="864" y="642" width="653" height="1" fill="#000"/><rect x="864" y="669" width="653" height="1" fill="#000"/><rect x="864" y="697" width="653" height="1" fill="#000"/><rect x="864" y="724" width="653" height="1" fill="#000"/><rect x="864" y="752" width="653" height="1" fill="#000"/><rect x="864" y="780" width="653" height="1" fill="#000"/><rect x="864" y="807" width="653" height="1" fill="#000"/><rect x="864" y="835" width="653" height="1" fill="#000"/><rect x="864" y="862" width="653" height="1" fill="#000"/><rect x="864" y="890" width="653" height="1" fill="#000"/><rect x="864" y="917" width="653" height="1" fill="#000"/></svg><div class="t td" style="left:867px;top:428px"><span class="cj">列名称</span></div><div class="t td" style="left:1031px;top:428px"><span class="cj">数据元编码</span></div><div class="t td" style="left:1182px;top:428px"><span class="cj">字段名称</span></div><div class="t td" style="left:1345px;top:428px"><span class="cj">字段类型</span></div><div class="t td" style="left:1461px;top:428px"><span class="cj">说明</span></div><div class="t td" style="left:867px;top:455px">bed_name</div><div class="t td" style="left:1182px;top:455px"><span class="cj">病床名称</span></div><div class="t td" style="left:1345px;top:455px">varchar(20)</div><div class="t td" style="left:867px;top:483px">ward_name</div><div class="t td" style="left:1182px;top:483px"><span class="cj">病房名称</span></div><div class="t td" style="left:1345px;top:483px">varchar(20)</div><div class="t td" style="left:867px;top:511px">wards_id</div><div class="t td" style="left:1182px;top:511px"><span class="cj">病区号</span></div><div class="t td" style="left:1345px;top:511px">varchar(10)</div><div class="t td" style="left:867px;top:538px">patient_id</div><div class="t td" style="left:1182px;top:538px"><span class="cj">机构内病人</span> ID</div><div class="t td" style="left:1345px;top:538px">varchar(64)</div><div class="t td" style="left:867px;top:566px">patient_domain</div><div class="t td" style="left:1182px;top:566px"><span class="cj">机构内病人域</span> ID</div><div class="t td" style="left:1345px;top:566px">varchar(64)</div><div class="t td" style="left:867px;top:593px">visit_domain</div><div class="t td" style="left:1182px;top:593px"><span class="cj">就诊域</span></div><div class="t td" style="left:1345px;top:593px">varchar(64)</div><div class="t td" style="left:867px;top:621px">visit_id</div><div class="t td" style="left:1182px;top:621px"><span class="cj">就诊号</span></div><div class="t td" style="left:1345px;top:621px">varchar(64)</div><div class="t td" style="left:867px;top:649px">visit_times</div><div class="t td" style="left:1182px;top:649px"><span class="cj">就诊次数</span></div><div class="t td" style="left:1345px;top:649px">varchar(64)</div><div class="t td" style="left:867px;top:676px">unique_id</div><div class="t td" style="left:1182px;top:676px"><span class="cj">文档流水号</span></div><div class="t td" style="left:1345px;top:676px">varchar(64)</div><div class="t td" style="left:867px;top:704px">effective_time</div><div class="t td" style="left:1182px;top:704px"><span class="cj">文书生成时间</span></div><div class="t td" style="left:1345px;top:704px">datetime</div><div class="t td" style="left:867px;top:731px">out_patient_id</div><div class="t td" style="left:1031px;top:731px">DE01.00.010.00</div><div class="t td" style="left:1182px;top:731px"><span class="cj">门</span>(<span class="cj">急</span>)<span class="cj">诊号</span></div><div class="t td" style="left:1345px;top:731px">varchar(18)</div><div class="t td" style="left:867px;top:759px">domain_id</div><div class="t td" style="left:1182px;top:759px"><span class="cj">机构所在域</span></div><div class="t td" style="left:1345px;top:759px">varchar(64)</div><div class="t td" style="left:867px;top:787px">visit_date</div><div class="t td" style="left:1182px;top:787px"><span class="cj">就诊日期时间</span></div><div class="t td" style="left:1345px;top:787px">datetime</div><div class="t td" style="left:867px;top:814px">inpatient</div><div class="t td" style="left:1031px;top:814px">DE01.00.014.00</div><div class="t td" style="left:1182px;top:814px"><span class="cj">住院号</span></div><div class="t td" style="left:1345px;top:814px">varchar(18)</div><div class="t td" style="left:867px;top:842px">patient_type</div><div class="t td" style="left:1182px;top:842px"><span class="cj">患者类型名称</span></div><div class="t td" style="left:1345px;top:842px">varchar(20)</div><div class="t td" style="left:867px;top:869px">report_id</div><div class="t td" style="left:1031px;top:869px">DE01.00.008.00</div><div class="t td" style="left:1182px;top:869px"><span class="cj">检验报告单编号</span></div><div class="t td" style="left:1345px;top:869px">varchar(20)</div><div class="t td" style="left:867px;top:897px">patient_typecode</div><div class="t td" style="left:1182px;top:897px"><span class="cj">患者类型代码</span></div><div class="t td" style="left:1345px;top:897px">char(1)</div></div>
<div class="a" style="left:1891px;top:236px;width:26px;height:765px;background:#dadada"></div>
<div class="a" style="left:1891px;top:237px;width:25px;height:25px;background:#fff;border:1px solid #888"></div>
<svg class="a" style="left:1898px;top:246px" width="12" height="7" viewBox="0 0 12 7"><path d="M0 7 H12 L6 0z" fill="#666"/></svg>
<div class="a" style="left:1891px;top:873px;width:25px;height:26px;background:#fff;border:1px solid #888"></div>
<div class="a" style="left:1891px;top:975px;width:25px;height:25px;background:#fff;border:1px solid #888"></div>
<svg class="a" style="left:1898px;top:984px" width="12" height="7" viewBox="0 0 12 7"><path d="M0 0 H12 L6 7z" fill="#666"/></svg>
<div class="a" style="left:0;top:1001px;width:1917px;height:10px;background:#f0f0f0;border-top:1px solid #c6c6c6"></div>
<div class="a" style="left:1523px;top:1002px;width:60px;height:9px;background:#c6c6c6"></div>
<div class="a" style="left:1484px;top:1009px;width:19px;height:5px;border:1px solid #666;border-bottom:0"></div>
<div class="a" style="left:1544px;top:1009px;width:19px;height:5px;border:1px solid #666;border-bottom:0"></div>
<div class="a" style="left:1604px;top:1009px;width:19px;height:5px;border:1px solid #666;border-bottom:0"></div>
<div class="a" style="left:1727px;top:1009px;width:8px;height:3px;background:#555"></div>
</body></html>
